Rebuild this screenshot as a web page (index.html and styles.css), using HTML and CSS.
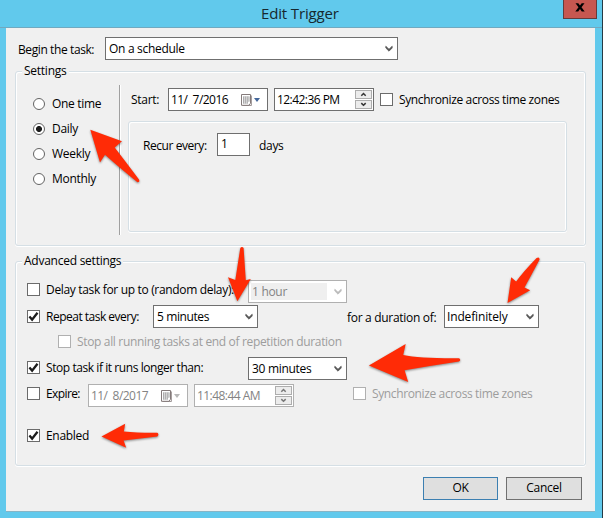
FILE: index.html
```
<!DOCTYPE html>
<html lang="en">
<head>
<meta charset="utf-8">
<title>Edit Trigger</title>
<link rel="stylesheet" href="styles.css">
</head>
<body>
<svg class="defs" width="0" height="0">
  <defs>
    <symbol id="chevron" viewBox="0 0 8 7"><path d="M.8 1.2 4 4.2 7.2 1.2V3L4 6.2.8 3Z" fill="currentColor" stroke="currentColor" stroke-width=".7"/></symbol>
    <symbol id="check" viewBox="0 0 11 11"><path d="M1.4 5.6 4.1 8.6 9.5 1.8" fill="none" stroke="#1c1c1c" stroke-width="2.3"/></symbol>
    <symbol id="calendar" viewBox="0 0 11 12"><path d="M.5.5h9v8.7L8 11.3H.5Z" fill="#fff" stroke="#857b7b"/><path d="M10.4 1.5v10H1.5" fill="none" stroke="#857b7b" stroke-width=".8"/><path d="M2 3h6.2M2 5h6.2M2 7h6.2M2 9h5M2.5 2.5v7M4.4 2.5v7M6.3 2.5v7M8.1 2.5v5" fill="none" stroke="#8b898c" stroke-width=".6"/></symbol>
    <symbol id="up" viewBox="0 0 15 7"><path d="M5.3 4.7 7.5 2.5 9.7 4.7" fill="none" stroke="currentColor" stroke-width="1.5"/></symbol>
    <symbol id="down" viewBox="0 0 15 7"><path d="M5.3 2.1 7.5 4.3 9.7 2.1" fill="none" stroke="currentColor" stroke-width="1.5"/></symbol>
  </defs>
</svg>
<main class="window">
  <header class="titlebar">
    <h1 class="title">Edit Trigger</h1>
    <button class="close" aria-label="Close"><svg width="10" height="9" viewBox="0 0 10 9"><path d="M.5.3h2.8L5 2.5 6.7.3h2.8L6.5 4.2 9.7 8.6H6.8L5 6 3.2 8.6H.3L3.5 4.2Z"/></svg></button>
  </header>
  <div class="client">
    <div class="row begin">
      <span class="label begin-label">Begin the task:</span>
      <div class="combo combo-task"><span>On a schedule</span><svg class="chev"><use href="#chevron"/></svg></div>
    </div>

    <section class="group settings">
      <h2 class="legend">Settings</h2>
      <div class="columns">
        <div class="radios">
          <div class="option"><i class="radio"></i><span>One time</span></div>
          <div class="option"><i class="radio on"></i><span>Daily</span></div>
          <div class="option"><i class="radio"></i><span>Weekly</span></div>
          <div class="option"><i class="radio"></i><span>Monthly</span></div>
        </div>
        <div class="schedule">
          <div class="row start">
            <span class="start-label">Start:</span>
            <div class="field"><span class="value">11/&nbsp; 7/2016</span><svg class="cal"><use href="#calendar"/></svg><i class="caret"></i></div>
            <div class="field time"><span class="value">12:42:36 PM</span><span class="spin"><svg><use href="#up"/></svg><svg><use href="#down"/></svg></span></div>
            <i class="box"></i><span class="sync">Synchronize across time zones</span>
          </div>
          <div class="panel">
            <span class="recur">Recur every:</span><span class="number">1</span><span class="days">days</span>
          </div>
        </div>
      </div>
    </section>

    <section class="group advanced">
      <h2 class="legend legend-adv">Advanced settings</h2>
      <div class="row delay">
        <i class="box"></i><span class="text t-delay">Delay task for up to (random delay):</span>
        <div class="combo combo-mid off"><span>1 hour</span><svg class="chev"><use href="#chevron"/></svg></div>
      </div>
      <div class="row repeat">
        <i class="box"><svg><use href="#check"/></svg></i><span class="text t-repeat">Repeat task every:</span>
        <div class="combo combo-repeat"><span>5 minutes</span><svg class="chev"><use href="#chevron"/></svg></div>
        <span class="duration">for a duration of:</span>
        <div class="combo combo-duration"><span>Indefinitely</span><svg class="chev"><use href="#chevron"/></svg></div>
      </div>
      <div class="row stop-all dim">
        <i class="box"></i><span class="text t-all">Stop all running tasks at end of repetition duration</span>
      </div>
      <div class="row stop">
        <i class="box"><svg><use href="#check"/></svg></i><span class="text t-stop">Stop task if it runs longer than:</span>
        <div class="combo combo-mid"><span>30 minutes</span><svg class="chev"><use href="#chevron"/></svg></div>
      </div>
      <div class="row expire">
        <i class="box"></i><span class="text t-expire">Expire:</span>
        <div class="field dis"><span class="value">11/&nbsp; 8/2017</span><svg class="cal"><use href="#calendar"/></svg><i class="caret"></i></div>
        <div class="field time dis"><span class="value">11:48:44 AM</span><span class="spin"><svg><use href="#up"/></svg><svg><use href="#down"/></svg></span></div>
        <div class="row dim expire-sync"><i class="box"></i><span class="sync">Synchronize across time zones</span></div>
      </div>
      <div class="row enabled">
        <i class="box"><svg><use href="#check"/></svg></i><span class="text t-enabled">Enabled</span>
      </div>
    </section>

    <footer class="actions">
      <button class="btn primary">OK</button>
      <button class="btn">Cancel</button>
    </footer>
  </div>
  <svg class="arrows" width="603" height="518" viewBox="0 0 603 518">
    <path d="M90.3 129.8 122 141.3 114.7 147.5Q124 159.5 139 179.5Q140.2 182.2 137.5 182.2Q122 170 105 154.8L100 162.6Z"/>
    <path d="M240.3 248Q242 246 243.6 248L245.8 280.2 250.8 279 237.4 301.2 228 277.3 235.3 280Q237.5 266 240.3 248Z"/>
    <path d="M536.6 258Q539.5 256.3 539.6 259.5Q532 274 524.5 287.4L530.2 290.3 507.5 302.9 511.2 277.2 516.1 281.6Q523 272 536.6 258Z"/>
    <path d="M459 358.2Q461.5 359.8 459 361.6Q430 366 404.6 370.2L408.2 382 368.9 365.6 405.7 344.1 403.2 355Q420 358.5 459 358.2Z"/>
    <path d="M157.3 432.8Q159.5 434.5 157.3 436.4L123.6 440.6 126.2 447.8 101.5 436.6 125.2 423.8 123.8 431.6Q138 433 157.3 432.8Z"/>
  </svg>
</main>
</body>
</html>
```

FILE: styles.css
```
* { box-sizing: border-box; }
body { margin: 0; font: 12px/16px "Open Sans", "Noto Sans", sans-serif; color: #000; letter-spacing: -0.3px; }
.defs { position: absolute; }
.window { position: relative; width: 603px; height: 518px; background: #61c9ec; border-right: 1px solid #263b45; overflow: hidden; }
.titlebar { display: flex; justify-content: space-between; height: 28px; padding: 0 5px 0 261px; border-bottom: 1px solid #70a9c0; margin: 0; }
.title { margin: 2px 0 0; font-size: 15px; line-height: 22px; font-weight: 400; letter-spacing: -0.15px; color: #16282f; }
.close { display: flex; align-items: center; justify-content: center; width: 34px; height: 19px; padding: 0 0 3px; border: 1px solid #653b3b; border-top: 0; background: #c75750; }
.client { width: 589px; height: 484px; margin-left: 6px; padding: 9px 9px 0; background: #f0f0f0; border-bottom: 1px solid #86b5c6; }
.row { display: flex; align-items: center; white-space: nowrap; height: 23px; }
.begin { padding-left: 3px; }
.label { width: 87px; padding-top: 3px; letter-spacing: -0.4px; }
.combo { display: flex; flex: none; align-items: center; justify-content: space-between; height: 23px; border: 1px solid #6f6f6f; background: #fff; padding: 0 4px 0 3px; line-height: 15px; }
.combo span { padding-bottom: 1px; }
.combo-task { width: 293px; }
.combo-task span { padding-bottom: 0; }
.combo-repeat { width: 105px; letter-spacing: -0.4px; }
.combo-duration { width: 95px; padding-left: 2px; letter-spacing: -0.15px; }
.combo-mid { width: 99px; }
.chev { width: 8px; height: 7px; color: #555; }
.off { border-color: #b0b0b0; color: #838383; padding-left: 3px; background: linear-gradient(#efefef, #efefef) 2px 2px / 76px 17px no-repeat #fff; }
.off .chev { color: #bababa; }
.group { width: 571px; border: 1px solid #d5dfe5; border-radius: 3px; box-shadow: inset 1px 1px #fff, inset -1px 0 #fff, 0 1px #fff; }
.settings { height: 175px; margin-top: 11px; }
.advanced { height: 205px; margin-top: 15px; }
.legend { width: 47px; height: 16px; margin: -9px 0 0 6px; padding-left: 2px; background: #f0f0f0; font-size: 12px; line-height: 16px; font-weight: 400; letter-spacing: -0.25px; white-space: nowrap; }
.legend-adv { width: 101px; }
.columns { display: flex; padding: 6px 0 0 17px; }
.radios { width: 87px; height: 150px; padding-top: 6px; border-right: 1px solid #a0a0a0; box-shadow: 1px 0 #fff; }
.option { display: flex; align-items: center; height: 25px; gap: 7px; }
.radio { width: 12px; height: 12px; border: 1px solid #636363; border-radius: 50%; background: #fff; }
.on { background: radial-gradient(circle, #1c1c1c 2.6px, #fff 3.4px); }
.schedule { margin: 3px 0 0 8px; }
.start-label { width: 37px; }
.start { padding-left: 3px; }
.field { display: flex; flex: none; align-items: center; width: 100px; height: 23px; padding-left: 2px; border: 1px solid #6f6f6f; background: #fff; letter-spacing: -0.55px; }
.value { flex: none; width: 70px; }
.cal { flex: none; width: 11px; height: 12px; }
.caret { flex: none; margin-left: 2px; border: 3.5px solid transparent; border-top: 4px solid #44679b; border-bottom: 0; }
.time { margin-left: 6px; }
.time .value { width: 78px; }
.spin { display: grid; gap: 1px; }
.spin svg { width: 17px; height: 9px; border: 1px solid #adadad; background: #ececec; color: #333; }
.dis { color: #838383; border-color: #b0b0b0; }
.dis .caret { border-top-color: #b8b8b8; }
.dis .spin svg { color: #777; }
.box { display: flex; flex: none; width: 13px; height: 13px; border: 1px solid #6b6b6b; background: #fff; }
.box svg { width: 11px; height: 11px; }
.start .box { margin-left: 6px; }
.sync { margin-left: 6px; letter-spacing: -0.37px; }
.panel { display: flex; align-items: flex-start; width: 439px; height: 111px; margin-top: 10px; padding: 11px 0 0 14px; border: 1px solid #d5dfe5; border-radius: 3px; box-shadow: inset 1px 1px #fff, inset -1px 0 #fff, 0 1px #fff; }
.recur { width: 74px; padding-top: 5px; letter-spacing: -0.43px; }
.number { width: 33px; height: 23px; padding: 2px 0 0 3px; border: 1px solid #6f6f6f; background: #fff; }
.days { padding: 5px 0 0 9px; }
.advanced .row { padding-left: 11px; }
.text { margin-left: 6px; }
.delay { margin-top: 11px; }
.delay > .box, .delay > .text { position: relative; top: -2px; }
.t-delay { width: 202px; letter-spacing: -0.33px; }
.repeat { margin-top: 2px; }
.t-repeat { width: 107px; letter-spacing: -0.5px; }
.duration { width: 97px; margin-left: 89px; padding-top: 3px; }
.advanced .stop-all { padding-left: 42px; margin-top: 2px; }
.t-all { letter-spacing: -0.34px; }
.dim { color: #9d9d9d; }
.dim .box { border-color: #b0b0b0; }
.stop { margin-top: 4px; }
.stop > .box, .stop > .text { position: relative; top: -1px; }
.t-stop { width: 202px; letter-spacing: -0.43px; }
.expire { margin-top: 4px; }
.t-expire { width: 42px; letter-spacing: -0.6px; }
.expire > .box, .expire > .text, .expire-sync { position: relative; top: -2px; }
.advanced .expire-sync { padding: 0; margin-left: 59px; }
.enabled { margin-top: 17px; }
.actions { display: flex; gap: 8px; margin: 11px 0 0 408px; }
.btn { width: 75px; height: 23px; padding: 0 0 1px; border: 1px solid #707070; background: #dfdfdf; font: inherit; letter-spacing: inherit; color: #000; }
.btn + .btn { width: 76px; }
.primary { border-color: #3c7fb1; }
.arrows { position: absolute; left: 0; top: 0; fill: #ff2b06; filter: drop-shadow(0 1.5px 1.2px rgba(0, 0, 0, .45)); pointer-events: none; }
```
